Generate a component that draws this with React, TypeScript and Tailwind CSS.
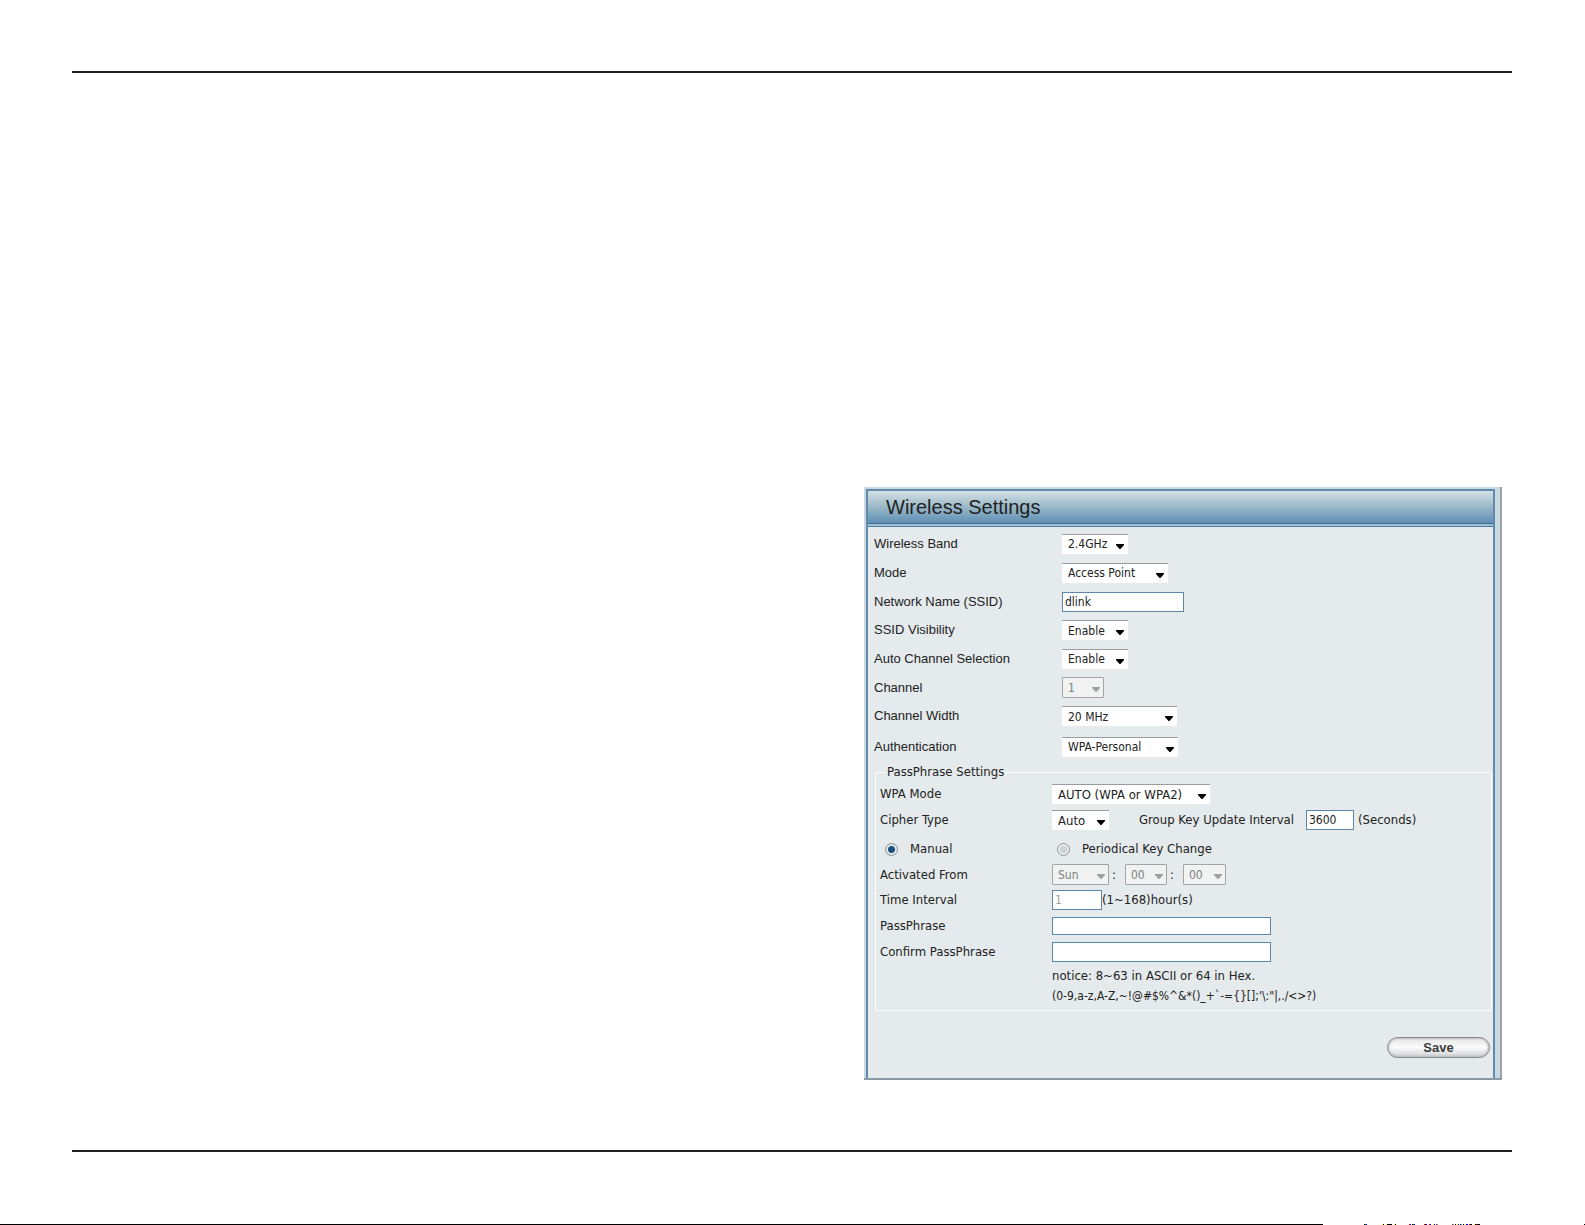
import { useId, useState } from 'react';
import type { ReactNode } from 'react';

function Row({ label, htmlFor, height = 'h-[29px]', children }: { label: string; htmlFor: string; height?: string; children: ReactNode }) {
  return (
    <div className={`flex items-center ${height}`}>
      <label htmlFor={htmlFor} className="w-[188px] shrink-0 font-['Liberation_Sans',Arial,sans-serif]">{label}</label>
      {children}
    </div>
  );
}

function PassRow({ label, htmlFor, height = 'h-[26px]', children }: { label: string; htmlFor: string; height?: string; children: ReactNode }) {
  return (
    <div className={`flex items-center ${height}`}>
      <label htmlFor={htmlFor} className="w-[172px] shrink-0">{label}</label>
      {children}
    </div>
  );
}

function Select({ id, options, width, size = 'text-[12px]', disabled = false, label }: { id?: string; options: string[]; width: string; size?: string; disabled?: boolean; label?: string }) {
  const tone = disabled
    ? 'h-[21px] border border-[#a3a6a7] bg-[#f1f3f3] text-[#7d7f80] rounded-[1px] pl-[5px]'
    : 'h-5 border-t border-[#9a9da0] bg-white text-[#222] pl-[6px]';
  return (
    <div className={`relative shrink-0 ${width}`}>
      <select
        id={id}
        aria-label={label}
        disabled={disabled}
        className={`block w-full appearance-none leading-4 opacity-100 outline-none ${size} ${tone}`}
      >
        {options.map((o) => <option key={o}>{o}</option>)}
      </select>
      <svg viewBox="0 0 8 5" className={`pointer-events-none absolute right-1 top-[10px] h-[5px] w-2 ${disabled ? 'fill-[#a0a0a0]' : 'fill-black'}`}>
        <path d="M0 0H8V1L4.5 5H3.5L0 1Z" />
      </svg>
    </div>
  );
}

function Radio({ checked, onChange }: { checked: boolean; onChange: () => void }) {
  return (
    <input
      type="radio"
      name="keyMode"
      checked={checked}
      onChange={onChange}
      className="size-[13px] appearance-none rounded-full border border-[#8c9196] bg-[radial-gradient(circle,#cfd3d5_0_3px,#f1f3f4_5px)] checked:bg-[radial-gradient(circle,#1d4f7c_0_3px,#dfe6ea_4px)]"
    />
  );
}

const box = 'border border-[#5b87ab] bg-white px-[2px] text-[12px] outline-none';

// [x, width, colour] of the marks on the bottom edge, starting after the line
const marks: [number, number, string][] = [
  [41, 1, '#000'], [42, 1, '#080'], [43, 1, '#00f'],
  [59, 1, '#ff0'], [60, 1, '#000'], [63, 1, '#ff0'], [64, 5, '#000'], [71, 1, '#ff0'], [72, 1, '#000'],
  [86, 1, '#f00'], [87, 1, '#00f'], [89, 1, '#000'], [90, 1, '#080'], [91, 1, '#00f'],
  [101, 1, '#f00'], [102, 1, '#000'], [103, 1, '#00f'], [106, 1, '#f00'], [107, 1, '#00f'], [110, 1, '#ff0'], [111, 1, '#00f'], [113, 1, '#f00'], [114, 1, '#0cc'],
  [129, 1, '#f00'], [130, 1, '#0cc'], [132, 1, '#000'], [134, 1, '#ff0'], [135, 1, '#00f'], [137, 1, '#000'], [138, 1, '#0cc'], [140, 1, '#000'],
  [142, 1, '#ff0'], [143, 2, '#00f'], [146, 1, '#f00'], [147, 2, '#000'], [151, 1, '#ff0'], [152, 1, '#000'], [153, 1, '#800'], [154, 3, '#000'],
];

export default function App() {
  const id = useId();
  const [keyMode, setKeyMode] = useState('manual');

  return (
    <div className="flex min-h-screen flex-col bg-white font-['Liberation_Sans',Arial,sans-serif] text-[#222]">
      <main className="mt-[71px] mr-[73px] ml-[72px] flex-1 border-t-2 border-[#231f20] pt-[414px]">
        <form
          onSubmit={(e) => e.preventDefault()}
          className="mr-[10px] ml-[55%] border-r-2 border-b-2 border-r-[#9aa3ad] border-b-[#8a9aa5] bg-[#c9d9df] pt-[2px] pr-[5px] pl-[2px]"
        >
          <div className="border-x-2 border-t-2 border-[#5f8bae] bg-[#e5eaec]">
            <h1 className="h-8 bg-linear-to-b from-[#d5e1e6] via-[#9ab8c8] to-[#5f8fb5] pl-[18px] text-[20px] leading-8">Wireless Settings</h1>
            <div className="h-1 border-t border-b border-t-[#3f6d90] border-b-[#4f80a5] bg-[#9fc0d2]" />

            <div className="pt-[2px] pl-[6px] font-['DejaVu_Sans_Condensed','Noto_Sans',sans-serif] text-[13px]">
              <Row label="Wireless Band" htmlFor={`${id}band`}>
                <Select id={`${id}band`} options={['2.4GHz', '5GHz']} width="w-[66px]" />
              </Row>
              <Row label="Mode" htmlFor={`${id}mode`}>
                <Select id={`${id}mode`} options={['Access Point', 'WDS with AP', 'WDS', 'Wireless Client']} width="w-[106px]" />
              </Row>
              <Row label="Network Name (SSID)" htmlFor={`${id}ssid`}>
                <input id={`${id}ssid`} defaultValue="dlink" className={`${box} h-5 w-[122px]`} />
              </Row>
              <Row label="SSID Visibility" htmlFor={`${id}vis`} height="h-7">
                <Select id={`${id}vis`} options={['Enable', 'Disable']} width="w-[66px]" />
              </Row>
              <Row label="Auto Channel Selection" htmlFor={`${id}auto`}>
                <Select id={`${id}auto`} options={['Enable', 'Disable']} width="w-[66px]" />
              </Row>
              <Row label="Channel" htmlFor={`${id}chan`}>
                <Select id={`${id}chan`} options={['1']} width="w-[42px]" disabled />
              </Row>
              <Row label="Channel Width" htmlFor={`${id}width`} height="h-7">
                <Select id={`${id}width`} options={['20 MHz', 'Auto 20/40 MHz']} width="w-[115px]" />
              </Row>
              <Row label="Authentication" htmlFor={`${id}auth`} height="h-[33px]">
                <Select id={`${id}auth`} options={['WPA-Personal', 'WPA-Enterprise', 'Open System']} width="w-[116px]" />
              </Row>
            </div>

            <fieldset className="mr-px ml-[7px] rounded-[2px] border border-white pb-[5px] pl-1 font-['DejaVu_Sans_Condensed','Noto_Sans',sans-serif] text-[13px]">
              <legend className="ml-[5px] h-[18px] px-[2px] leading-[18px]">PassPhrase Settings</legend>
              <PassRow label="WPA Mode" htmlFor={`${id}wpa`}>
                <Select id={`${id}wpa`} options={['AUTO (WPA or WPA2)', 'WPA2 Only', 'WPA Only']} width="w-[158px]" size="text-[13px]" />
              </PassRow>
              <PassRow label="Cipher Type" htmlFor={`${id}cipher`}>
                <Select id={`${id}cipher`} options={['Auto', 'AES', 'TKIP']} width="w-[57px]" size="text-[13px]" />
                <label htmlFor={`${id}group`} className="ml-[30px] w-[167px] whitespace-nowrap">Group Key Update Interval</label>
                <input id={`${id}group`} defaultValue="3600" className={`${box} h-5 w-12`} />
                <span className="ml-1">(Seconds)</span>
              </PassRow>
              <div className="flex h-[29px] items-center pt-[3px]">
                <label className="flex w-[172px] items-center gap-3 pl-[5px]">
                  <Radio checked={keyMode === 'manual'} onChange={() => setKeyMode('manual')} />
                  Manual
                </label>
                <label className="flex items-center gap-3 pl-[5px]">
                  <Radio checked={keyMode === 'periodical'} onChange={() => setKeyMode('periodical')} />
                  Periodical Key Change
                </label>
              </div>
              <PassRow label="Activated From" htmlFor={`${id}day`} height="h-[25px]">
                <Select id={`${id}day`} options={['Sun']} width="w-[57px]" disabled />
                <span className="w-4 pl-[3px]">:</span>
                <Select label="Hour" options={['00']} width="w-[42px]" disabled />
                <span className="w-4 pl-[3px]">:</span>
                <Select label="Minute" options={['00']} width="w-[43px]" disabled />
              </PassRow>
              <PassRow label="Time Interval" htmlFor={`${id}time`}>
                <input id={`${id}time`} defaultValue="1" disabled className={`${box} h-5 w-[50px] text-[#a0a0a0]`} />
                <span>(1~168)hour(s)</span>
              </PassRow>
              <PassRow label="PassPhrase" htmlFor={`${id}pass`}>
                <input id={`${id}pass`} type="password" className={`${box} h-[18px] w-[219px]`} />
              </PassRow>
              <PassRow label="Confirm PassPhrase" htmlFor={`${id}confirm`}>
                <input id={`${id}confirm`} type="password" className={`${box} h-5 w-[219px]`} />
              </PassRow>
              <p className="pl-[172px] leading-[22px]">notice: 8~63 in ASCII or 64 in Hex.</p>
              <p className="pl-[172px] text-[12px] leading-[18px]">{`(0-9,a-z,A-Z,~!@#$%^&*()_+\`-={}[];'\\:"|,./<>?)`}</p>
            </fieldset>

            <div className="flex justify-end pt-[26px] pr-[3px] pb-5">
              <button
                type="submit"
                className="h-[21px] w-[103px] rounded-full border border-[#85888b] bg-linear-to-b from-[#e6e6e7] via-[#fbfbfb] to-[#cfd1d3] text-[13px] leading-[18px] font-bold text-[#3a3a3a] shadow-[inset_0_0_2px_1px_#b9bcbe]"
              >
                Save
              </button>
            </div>
          </div>
        </form>
      </main>

      <footer className="mt-[68px]">
        <div className="mr-[73px] mb-[72px] ml-[72px] h-[2px] bg-[#231f20]" />
        <div className="flex h-px">
          <div className="flex-1 bg-black" />
          <svg viewBox="0 0 262 1" className="h-px w-[262px]" shapeRendering="crispEdges">
            {marks.map(([x, w, fill]) => <rect key={x} x={x} width={w} height="1" fill={fill} />)}
            <rect x="261" width="1" height="1" />
          </svg>
        </div>
      </footer>
    </div>
  );
}
